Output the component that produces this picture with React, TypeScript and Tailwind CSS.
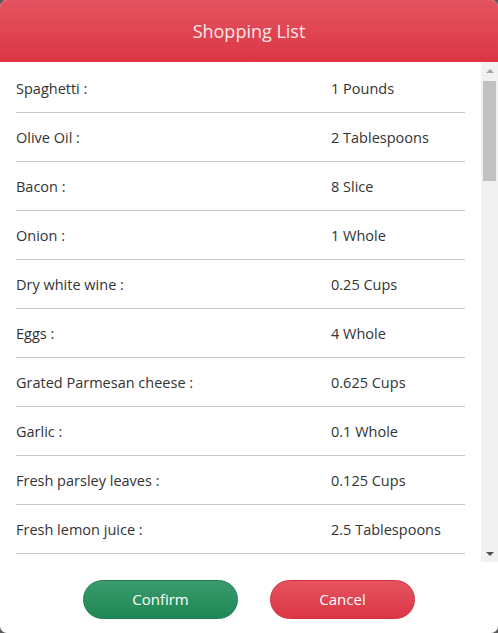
const items: [string, string][] = [
  ["Spaghetti :", "1 Pounds"],
  ["Olive Oil :", "2 Tablespoons"],
  ["Bacon :", "8 Slice"],
  ["Onion :", "1 Whole"],
  ["Dry white wine :", "0.25 Cups"],
  ["Eggs :", "4 Whole"],
  ["Grated Parmesan cheese :", "0.625 Cups"],
  ["Garlic :", "0.1 Whole"],
  ["Fresh parsley leaves :", "0.125 Cups"],
  ["Fresh lemon juice :", "2.5 Tablespoons"],
];

function Scrollbar() {
  return (
    <div className="flex w-[17px] shrink-0 flex-col items-center bg-[#f1f1f1]">
      <div className="flex h-[17px] w-full items-center justify-center">
        <div className="h-0 w-0 border-x-[4px] border-b-[4px] border-x-transparent border-b-[#a3a3a3]" />
      </div>
      <div className="mt-[2px] h-[100px] w-[13px] bg-[#c1c1c1]" />
      <div className="flex-1" />
      <div className="flex h-[17px] w-full items-center justify-center">
        <div className="h-0 w-0 border-x-[4px] border-t-[4px] border-x-transparent border-t-[#505050]" />
      </div>
    </div>
  );
}

export default function App() {
  return (
    <div className="h-[633px] w-[498px] bg-[#5a5a5a] font-['Open_Sans',sans-serif]">
      <div className="flex h-full flex-col overflow-hidden rounded-[7px] bg-white">
        <div className="flex h-[62px] shrink-0 items-center justify-center bg-gradient-to-b from-[#e4535f] to-[#dc3545]">
          <h1 className="text-[18px] font-normal text-[#fde8ea]">Shopping List</h1>
        </div>
        <div className="flex h-[500px] shrink-0">
          <div className="flex-1 overflow-hidden">
            <ul className="px-4 pt-[2px]">
              {items.map(([name, qty]) => (
                <li
                  key={name}
                  className="flex h-[49px] items-center border-b border-[#c8c8c8] pt-[1px] text-[14.5px] text-[#333]"
                >
                  <span className="w-[315px]">{name}</span>
                  <span>{qty}</span>
                </li>
              ))}
            </ul>
          </div>
          <Scrollbar />
        </div>
        <div className="flex flex-1 items-start justify-center gap-8 pt-[18px]">
          <button className="h-[39px] w-[155px] rounded-full border border-[#1e8050] bg-gradient-to-b from-[#3b9b6e] to-[#1b8753] text-[15px] text-white">
            Confirm
          </button>
          <button className="h-[39px] w-[145px] rounded-full border border-[#d03040] bg-gradient-to-b from-[#e4535f] to-[#dc3545] text-[15px] text-white">
            Cancel
          </button>
        </div>
      </div>
    </div>
  );
}
